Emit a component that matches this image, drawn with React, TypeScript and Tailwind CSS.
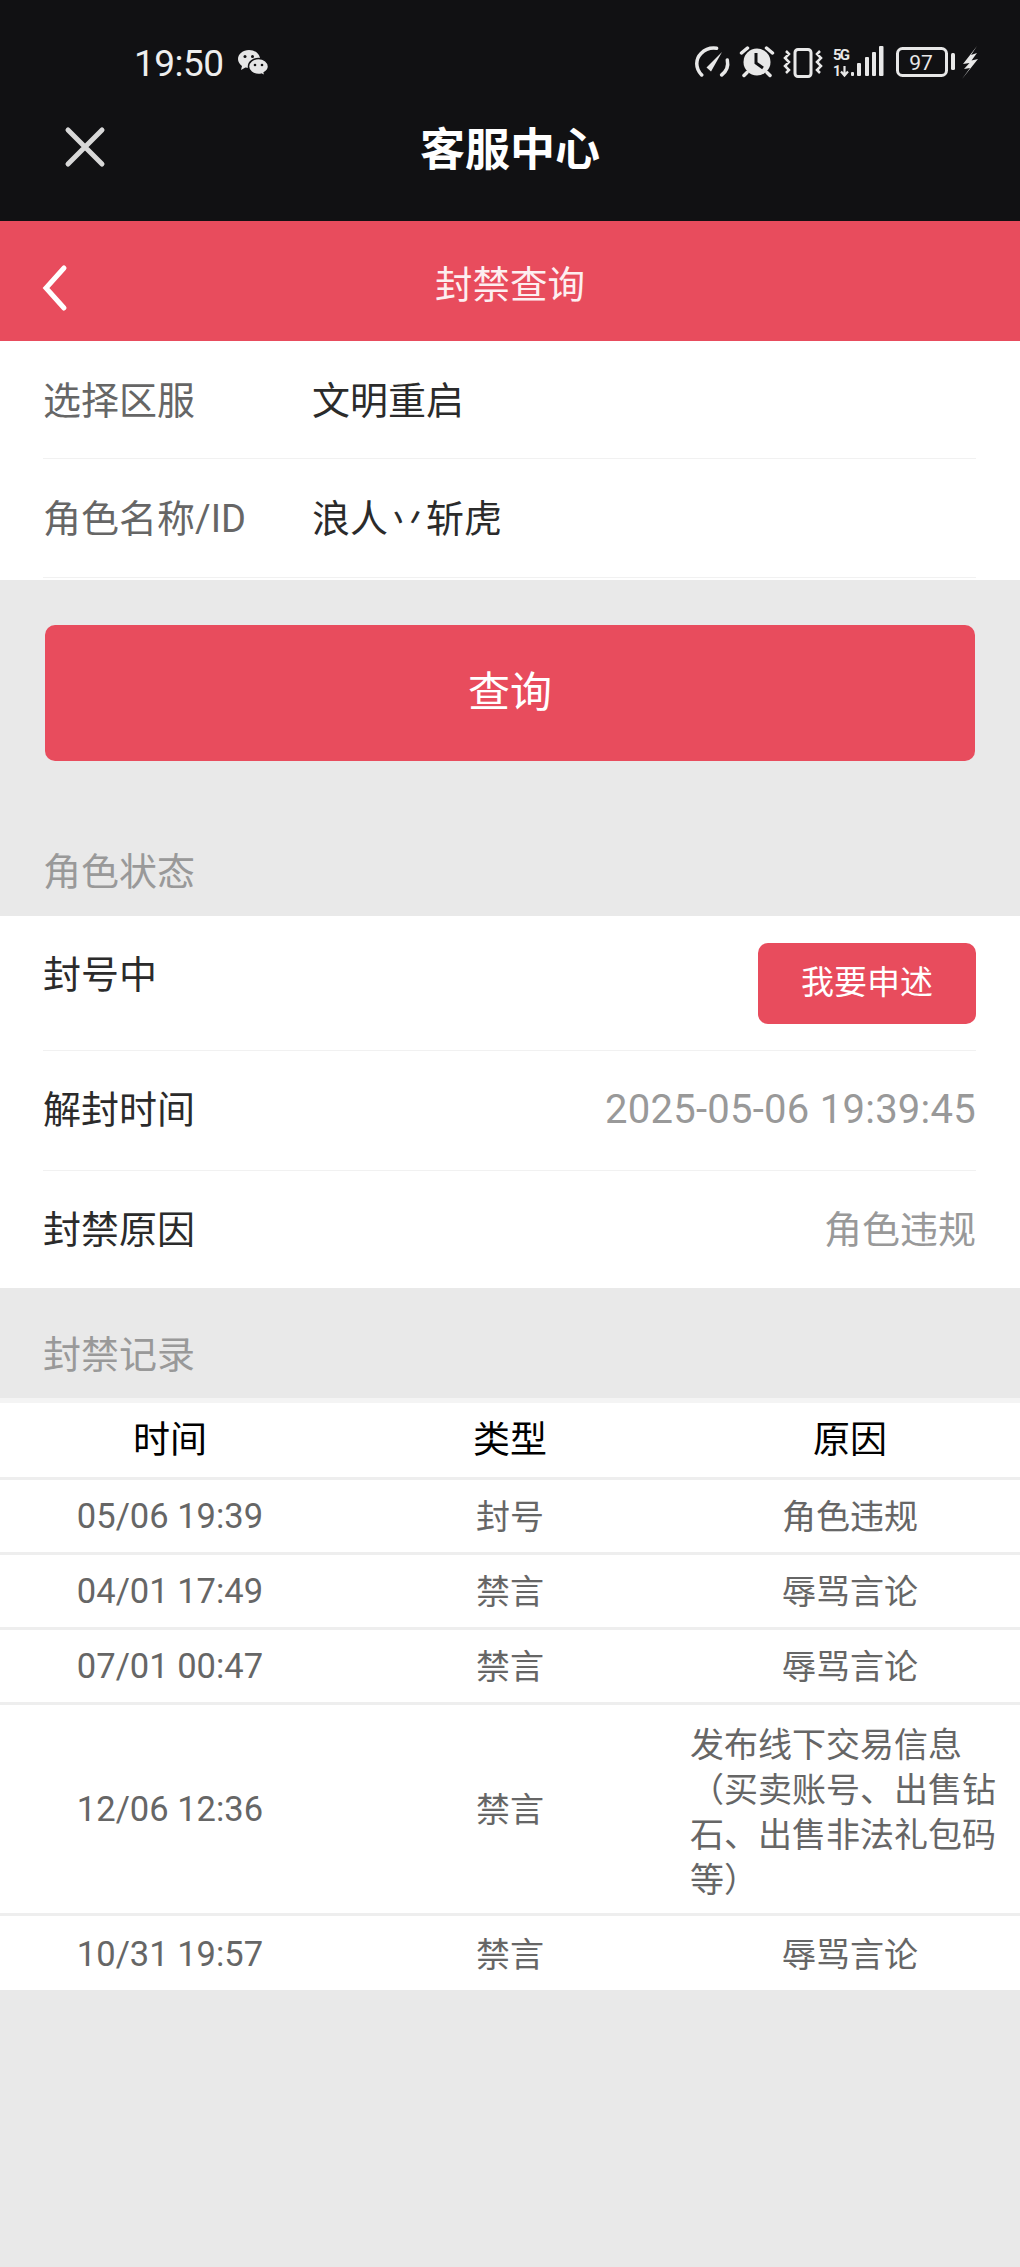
const records = [
  { time: "05/06 19:39", type: "封号", reason: "角色违规" },
  { time: "04/01 17:49", type: "禁言", reason: "辱骂言论" },
  { time: "07/01 00:47", type: "禁言", reason: "辱骂言论" },
  { time: "12/06 12:36", type: "禁言", reason: "发布线下交易信息（买卖账号、出售钻石、出售非法礼包码等）" },
  { time: "10/31 19:57", type: "禁言", reason: "辱骂言论" },
];

function WeChatIcon() {
  return (
    <svg width="32" height="28" viewBox="0 0 32 28" className="ml-[13px] mt-[-2px]">
      <path d="M12 1C5.900 1 1 5 1 10c0 2.800 1.500 5.200 4 6.900L4 21l4.400-2.400c1.100.3 2.400.5 3.600.5 6.100 0 11-4 11-9.100S18.100 1 12 1z" fill="#e6e6e6" />
      <path d="M21.500 9.500c-5.500 0-10 3.600-10 8s4.500 8 10 8c1 0 2-.1 2.900-.4L28 27l-.8-3.400c2.900-1.500 4.300-3.600 4.300-6.100 0-4.400-4.500-8-10-8z" fill="#e6e6e6" stroke="#111113" strokeWidth="1.500" />
      <circle cx="8" cy="7.500" r="1.500" fill="#111113" />
      <circle cx="15.500" cy="7.500" r="1.500" fill="#111113" />
      <circle cx="18" cy="16" r="1.300" fill="#111113" />
      <circle cx="25" cy="16" r="1.300" fill="#111113" />
    </svg>
  );
}

function StatusIcons() {
  return (
    <svg width="290" height="36" viewBox="0 0 290 36" fill="none">
      {/* speedometer */}
      <path d="M7.700 29C1 22 1.500 13 7 7.500 11.500 3 17 1.500 22.600 2.300" stroke="#e8e8e8" strokeWidth="3.500" strokeLinecap="round" />
      <path d="M33.300 14c1.200 5.500-.5 11-5.700 15" stroke="#e8e8e8" strokeWidth="3.500" strokeLinecap="round" />
      <path d="M12.500 21.500L28 6l-11 19.500z" fill="#e8e8e8" />
      {/* alarm */}
      <circle cx="63" cy="16" r="13.500" fill="#e8e8e8" />
      <path d="M62 7v10l7 5" stroke="#111113" strokeWidth="3" />
      <path d="M47.500 7l6-5M78.500 7l-6-5M50 29.500l3-3M76 29.500l-3-3" stroke="#e8e8e8" strokeWidth="3.500" strokeLinecap="round" />
      {/* vibrate */}
      <rect x="101" y="3.500" width="16" height="27" rx="3" stroke="#e8e8e8" strokeWidth="3" />
      <path d="M92 5l3 3-4 4 4 4-4 4 4 4-3 3M126 5l-3 3 4 4-4 4 4 4-4 4 3 3" stroke="#e8e8e8" strokeWidth="2.500" />
      {/* 5G + signal */}
      <text x="139" y="14" fill="#e8e8e8" fontFamily="Roboto, sans-serif" fontSize="15" fontWeight="700" textLength="17">5G</text>
      <text x="139" y="30" fill="#e8e8e8" fontFamily="Roboto, sans-serif" fontSize="14" fontWeight="700">1</text>
      <path d="M150.500 20v9M147 25.500l3.500 4 3.500-4" stroke="#e8e8e8" strokeWidth="2.200" />
      <rect x="157" y="26" width="3" height="4" rx="1" fill="#e8e8e8" />
      <rect x="163" y="17" width="4" height="13" rx="1" fill="#e8e8e8" />
      <rect x="171" y="11" width="4" height="19" rx="1" fill="#e8e8e8" />
      <rect x="178" y="6" width="4" height="24" rx="1" fill="#e8e8e8" />
      <rect x="185" y="0" width="4.500" height="30" rx="1" fill="#e8e8e8" />
      {/* battery */}
      <rect x="203.500" y="2.500" width="49" height="27" rx="5" stroke="#e8e8e8" strokeWidth="3" />
      <rect x="257" y="7" width="4" height="17" rx="1.500" fill="#e8e8e8" />
      <text x="227" y="24" textAnchor="middle" fill="#e8e8e8" fontFamily="Roboto, sans-serif" fontSize="21">97</text>
      {/* charging */}
      <path d="M283 0L269 18l6.500-1L270 23l6-1-8 11 16-20-6.500 1.500L283 7l-6 2z" fill="#e8e8e8" />
    </svg>
  );
}

function FormRow({ label, value, className }: { label: string; value: string; className: string }) {
  return (
    <div className={`flex items-center border-b border-[#f1f1f1] text-[38px] ${className}`}>
      <span className="w-[269px] text-[#666]">{label}</span>
      <span className="text-[#2b2b2b]">{value}</span>
    </div>
  );
}

function StatusRow({ label, value, numeric }: { label: string; value: string; numeric?: boolean }) {
  return (
    <div className="flex items-center justify-between text-[38px] leading-[56px]">
      <span className="text-[#2b2b2b]">{label}</span>
      <span className={numeric ? "text-[40px] tracking-[0.25px] text-[#999]" : "text-[#999]"}>{value}</span>
    </div>
  );
}

export default function App() {
  return (
    <div className="min-h-[2267px] w-full bg-[#e9e9e9] font-['Roboto','Noto_Sans_CJK_SC',sans-serif]">
      <header className="h-[221px] bg-[#111113] text-white">
        <div className="flex h-[126px] items-center pt-[1px]">
          <div className="ml-[134px] flex items-center">
            <span className="text-[37px] leading-none tracking-[-0.5px] text-[#eee]">19:50</span>
            <WeChatIcon />
          </div>
          <div className="ml-auto mr-[36px] mt-[1px]">
            <StatusIcons />
          </div>
        </div>
        <div className="relative flex h-[48px] items-center justify-center">
          <svg width="42" height="42" viewBox="0 0 42 42" className="absolute left-[64px] top-[0px]">
            <path d="M4 4l34 34M38 4L4 38" stroke="#d8d8d8" strokeWidth="5" strokeLinecap="round" />
          </svg>
          <h1 className="text-[45px] font-bold leading-none">客服中心</h1>
        </div>
      </header>

      <div className="relative flex h-[120px] items-center justify-center bg-[#e84c5d] pt-[8px]">
        <svg width="30" height="48" viewBox="0 0 30 48" className="absolute left-[41px] top-[43px]">
          <path d="M23 4L5 24l18 20" fill="none" stroke="#fff" strokeWidth="5" strokeLinecap="round" />
        </svg>
        <span className="text-[37.500px] text-[#fdeef0]">封禁查询</span>
      </div>

      <section className="bg-white pb-[2px] pl-[43px] pr-[44px]">
        <FormRow label="选择区服" value="文明重启" className="h-[118px] pt-[3px]" />
        <FormRow label="角色名称/ID" value="浪人丷斩虎" className="h-[119px] pt-[3px]" />
      </section>

      <div className="px-[45px] pt-[45px]">
        <button className="flex h-[136px] w-full items-center justify-center rounded-[10px] bg-[#e84c5d] pb-[2px] text-[42px] text-white">
          查询
        </button>
      </div>

      <div className="flex h-[155px] items-end pb-[19px] pl-[43px] text-[38px] leading-[50px] text-[#999]">角色状态</div>

      <section className="bg-white pl-[43px] pr-[44px]">
        <div className="flex h-[135px] items-start justify-between border-b border-[#f1f1f1]">
          <span className="mt-[34px] text-[38px] leading-[50px] text-[#2b2b2b]">封号中</span>
          <button className="mt-[27px] h-[81px] w-[218px] rounded-[10px] bg-[#e84c5d] pb-[2px] text-[33px] text-white">我要申述</button>
        </div>
        <div className="h-[120px] border-b border-[#f1f1f1] pt-[31px]">
          <StatusRow label="解封时间" value="2025-05-06 19:39:45" numeric />
        </div>
        <div className="h-[117px] pt-[31px]">
          <StatusRow label="封禁原因" value="角色违规" />
        </div>
      </section>

      <div className="flex h-[110px] items-end pb-[18px] pl-[43px] text-[38px] leading-[50px] text-[#999]">封禁记录</div>

      <section className="border-t-[5px] border-[#f4f4f4] bg-white">
        <div className="grid h-[77px] grid-cols-3 items-center border-b-[3px] border-[#eee] pt-[2px] text-center text-[37px] text-black">
          <span>时间</span>
          <span>类型</span>
          <span>原因</span>
        </div>
        {records.map((r) => (
          <div
            key={r.time}
            className="grid min-h-[75px] grid-cols-3 items-center border-b-[3px] border-[#eee] text-center text-[34px] leading-[45px] text-[#666] last:min-h-[74px] last:border-b-0 last:pt-[2px]"
          >
            <span className="text-[34.500px]">{r.time}</span>
            <span className="pt-[3px]">{r.type}</span>
            <span className={r.reason.length > 8 ? "pb-[10px] pl-[10px] pr-[8px] pt-[18px] text-left" : "pt-[3px]"}>{r.reason}</span>
          </div>
        ))}
      </section>
    </div>
  );
}
